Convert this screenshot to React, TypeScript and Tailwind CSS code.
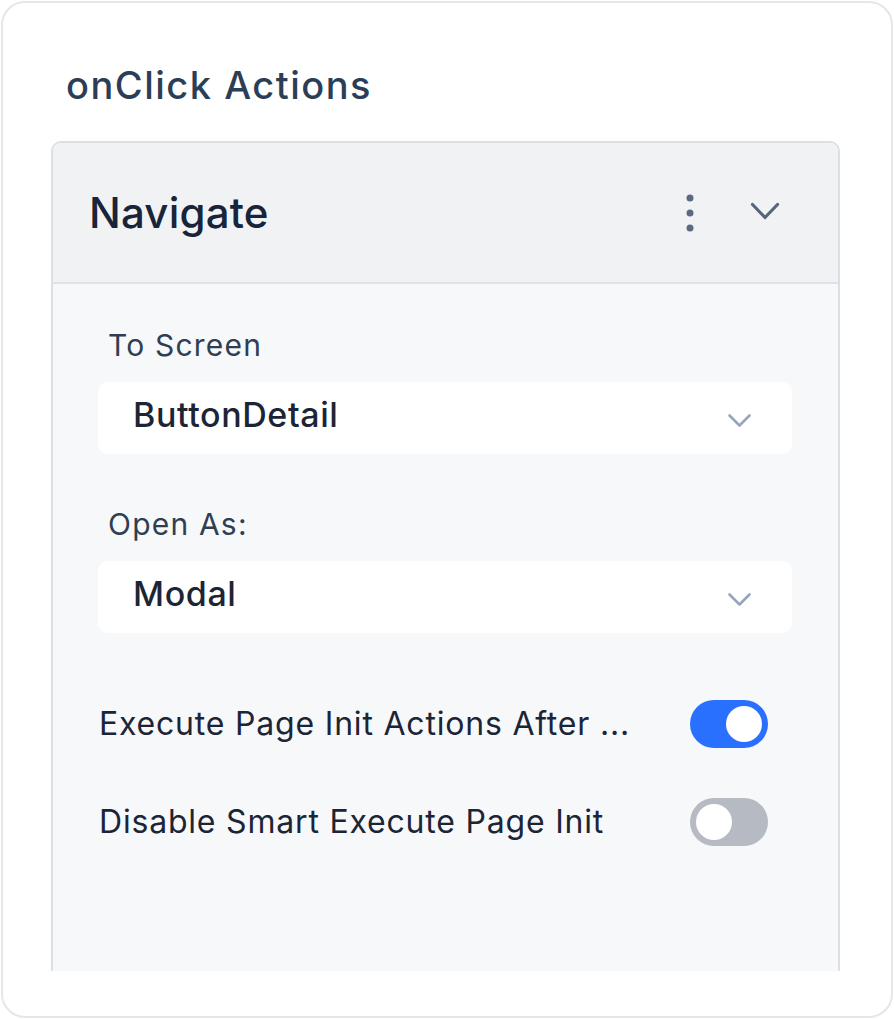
import React from 'react';

function SelectBox({ value }: { value: string }) {
  return (
    <div className="flex h-[72px] items-center justify-between rounded-[10px] bg-white pl-[35px] pr-[40px]">
      <span className="mb-[6px] text-[34px] font-medium leading-[42px] tracking-[0.6px] text-[#1c2536]">{value}</span>
      <svg className="mt-[5px] h-[15px] w-[25px] text-[#98a3bd]" viewBox="0 0 25 15" fill="none" stroke="currentColor" strokeWidth={2.6} strokeLinecap="round" strokeLinejoin="round">
        <path d="M2.5 2.5l10 10 10-10" />
      </svg>
    </div>
  );
}

function Toggle({ on }: { on: boolean }) {
  return (
    <div
      className={`flex h-[48px] w-[78px] shrink-0 items-center rounded-full px-[6px] ${
        on ? 'justify-end bg-[#2970ff]' : 'justify-start bg-[#b5bac3]'
      }`}
    >
      <div className="h-[36px] w-[36px] rounded-full bg-white" />
    </div>
  );
}

export default function App() {
  return (
    <div className="h-[1019px] w-[894px] bg-white p-px" style={{ fontFamily: 'Inter, "Noto Sans", sans-serif' }}>
      <div className="flex h-full flex-col overflow-hidden rounded-[24px] border-2 border-[#e4e6ea]">
        <h1 className="pl-[63px] pt-[59px] text-[38px] font-medium leading-[46px] tracking-[1.5px] text-[#2c3e56]">
          onClick Actions
        </h1>

        <div className="ml-[48px] mr-[51px] mt-[33px] flex min-h-0 flex-1 flex-col pb-[45px]">
          <div className="flex min-h-0 flex-1 flex-col overflow-hidden rounded-t-[10px] border-2 border-b-0 border-[#dcdfe4]">
            {/* header */}
            <div className="flex h-[141px] shrink-0 items-center justify-between border-b-2 border-[#dfe1e5] bg-[#f1f2f4] pl-[36px] pr-[58px]">
              <span className="text-[42px] font-medium leading-[50px] tracking-[0.2px] text-[#18243a]">Navigate</span>
              <div className="flex items-center gap-[55px]">
                <svg className="h-[40px] w-[10px] text-[#5b6a80]" viewBox="0 0 10 40" fill="currentColor">
                  <circle cx="5" cy="5" r="3.5" />
                  <circle cx="5" cy="20" r="3.5" />
                  <circle cx="5" cy="35" r="3.5" />
                </svg>
                <svg className="mb-[2px] h-[19px] w-[30px] text-[#56657c]" viewBox="0 0 30 19" fill="none" stroke="currentColor" strokeWidth={3.2} strokeLinecap="round" strokeLinejoin="round">
                  <path d="M2.5 2.5l12.5 13 12.5-13" />
                </svg>
              </div>
            </div>

            {/* body */}
            <div className="flex flex-1 flex-col bg-[#f7f8fa] pl-[45px] pr-[46px] pt-[43px]">
              <label className="pl-[10px] text-[30px] font-normal leading-[36px] tracking-[1.2px] text-[#2f3e52]">To Screen</label>
              <div className="mt-[19px]">
                <SelectBox value="ButtonDetail" />
              </div>

              <label className="mt-[52px] pl-[10px] text-[30px] font-normal leading-[36px] tracking-[1.2px] text-[#2f3e52]">Open As:</label>
              <div className="mt-[19px]">
                <SelectBox value="Modal" />
              </div>

              <div className="mt-[67px] flex items-center justify-between pr-[24px]">
                <span className="pl-[1px] text-[32px] font-normal leading-[40px] tracking-[0.8px] text-[#1c2536]">Execute Page Init Actions After ...</span>
                <Toggle on />
              </div>
              <div className="mt-[50px] flex items-center justify-between pr-[24px]">
                <span className="pl-[1px] text-[32px] font-normal leading-[40px] tracking-[0.8px] text-[#1c2536]">Disable Smart Execute Page Init</span>
                <Toggle on={false} />
              </div>
            </div>
          </div>
        </div>
      </div>
    </div>
  );
}
